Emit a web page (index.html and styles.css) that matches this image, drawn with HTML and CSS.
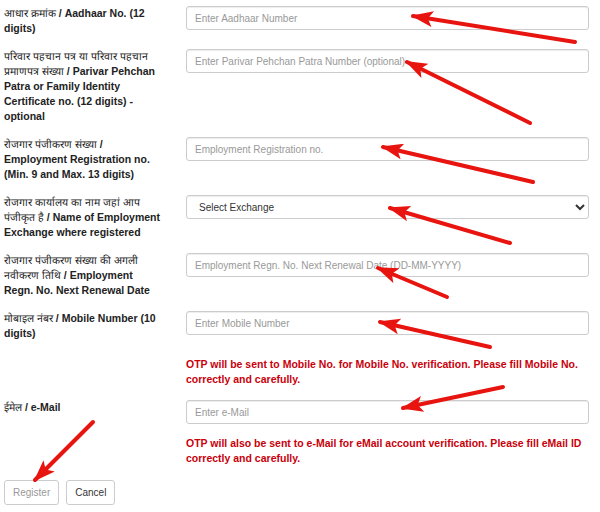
FILE: index.html
```html
<!DOCTYPE html>
<html lang="en">
<head>
    <meta charset="UTF-8">
    <meta name="viewport" content="width=device-width, initial-scale=1.0">
    <title>Registration</title>
    <link rel="stylesheet" href="styles.css">
</head>
<body>
    <form class="reg-form">
        <div class="row">
            <label for="aadhaar"><span class="hi">आधार क्रमांक</span> / Aadhaar No. (12 digits)</label>
            <div class="field">
                <input type="text" id="aadhaar" placeholder="Enter Aadhaar Number">
            </div>
        </div>
        <div class="row">
            <label for="ppp"><span class="hi">परिवार पहचान पत्र या परिवार पहचान प्रमाणपत्र संख्या</span> / Parivar Pehchan Patra or Family Identity Certificate no. (12 digits) - optional</label>
            <div class="field">
                <input type="text" id="ppp" placeholder="Enter Parivar Pehchan Patra Number (optional)">
            </div>
        </div>
        <div class="row">
            <label for="empreg"><span class="hi">रोजगार पंजीकरण संख्या</span> / Employment Registration no. (Min. 9 and Max. 13 digits)</label>
            <div class="field">
                <input type="text" id="empreg" placeholder="Employment Registration no.">
            </div>
        </div>
        <div class="row">
            <label for="exchange"><span class="hi">रोजगार कार्यालय का नाम जहां आप पंजीकृत है</span> / Name of Employment Exchange where registered</label>
            <div class="field">
                <select id="exchange">
                    <option>Select Exchange</option>
                </select>
            </div>
        </div>
        <div class="row">
            <label for="renewal"><span class="hi">रोजगार पंजीकरण संख्या की अगली नवीकरण तिथि</span> / Employment Regn. No. Next Renewal Date</label>
            <div class="field">
                <input type="text" id="renewal" placeholder="Employment Regn. No. Next Renewal Date (DD-MM-YYYY)">
            </div>
        </div>
        <div class="row">
            <label for="mobile"><span class="hi">मोबाइल नंबर</span> / Mobile Number (10 digits)</label>
            <div class="field">
                <input type="text" id="mobile" placeholder="Enter Mobile Number">
                <p class="note note-mobile">OTP will be sent to Mobile No. for Mobile No. verification. Please fill Mobile No. correctly and carefully.</p>
            </div>
        </div>
        <div class="row row-last">
            <label for="email"><span class="hi">ईमेल</span> / e-Mail</label>
            <div class="field">
                <input type="text" id="email" placeholder="Enter e-Mail">
                <p class="note note-email">OTP will also be sent to e-Mail for eMail account verification. Please fill eMail ID correctly and carefully.</p>
            </div>
        </div>
        <div class="actions">
            <button type="submit" class="btn btn-disabled">Register</button>
            <button type="button" class="btn">Cancel</button>
        </div>
    </form>

    <!-- annotation arrows drawn over the form -->
    <svg class="arrows" width="600" height="512" viewBox="0 0 600 512">
        <defs>
            <marker id="head" markerWidth="22" markerHeight="16" refX="20" refY="8" orient="auto" markerUnits="userSpaceOnUse">
                <path d="M0,0 L22,8 L0,16 L5,8 Z" fill="#e8140f"/>
            </marker>
        </defs>
        <g stroke="#e8140f" stroke-width="4" stroke-linecap="round" marker-end="url(#head)">
            <line x1="575" y1="42" x2="413" y2="16"/>
            <line x1="530" y1="123" x2="407" y2="62"/>
            <line x1="533" y1="182" x2="383" y2="147"/>
            <line x1="510" y1="243" x2="390" y2="208"/>
            <line x1="447" y1="297" x2="378" y2="268"/>
            <line x1="490" y1="347" x2="380" y2="322"/>
            <line x1="503" y1="387" x2="403" y2="408"/>
            <line x1="93" y1="422" x2="35" y2="480"/>
        </g>
    </svg>
</body>
</html>
```

FILE: styles.css
```css
body {
    margin: 0;
    padding: 6px 4px 0;
    background-color: #fff;
    font-family: "Liberation Sans", Arial, sans-serif;
    font-size: 10.5px;
    line-height: 15px;
    color: #333;
}
.reg-form {
    width: 585px;
}
.row {
    display: grid;
    grid-template-columns: 158px 1fr;
    column-gap: 24px;
    margin-bottom: 13px;
}
.row-last {
    margin-bottom: 14px;
}
label {
    font-weight: bold;
    color: #222;
}
label .hi {
    font-weight: normal;
}
.field input,
.field select {
    display: block;
    width: 100%;
    height: 24px;
    box-sizing: border-box;
    padding: 0 8px;
    border: 1px solid #ccc;
    border-radius: 3px;
    box-shadow: inset 0 1px 1px rgba(0,0,0,0.075);
    font-family: "Liberation Sans", Arial, sans-serif;
    font-size: 10px;
    color: #333;
    background-color: #fff;
}
.field input::placeholder {
    color: #999;
}
.field select {
    padding-left: 8px;
}
.note {
    margin: 0;
    font-weight: bold;
    color: #c9000b;
}
.note-mobile {
    margin-top: 22px;
}
.note-email {
    margin-top: 12px;
}
.actions {
    display: flex;
    gap: 7px;
}
.btn {
    height: 25px;
    padding: 0 8px;
    border: 1px solid #ccc;
    border-radius: 3px;
    background-color: #fff;
    font-family: "Liberation Sans", Arial, sans-serif;
    font-size: 10px;
    color: #333;
}
.btn-disabled {
    color: #999;
}
.arrows {
    position: absolute;
    top: 0;
    left: 0;
    pointer-events: none;
}
```
